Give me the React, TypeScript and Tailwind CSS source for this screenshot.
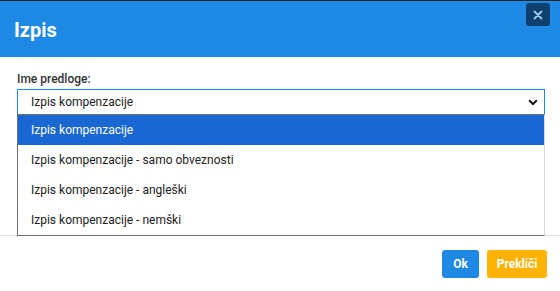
import React from "react";

export default function App() {
  const items = [
    "Izpis kompenzacije",
    "Izpis kompenzacije - samo obveznosti",
    "Izpis kompenzacije - angleški",
    "Izpis kompenzacije - nemški",
  ];
  return (
    <div
      className="w-[560px] h-[291px] bg-white flex flex-col overflow-hidden relative"
      style={{ fontFamily: "Roboto, 'Liberation Sans', sans-serif" }}
    >
      <div className="h-[1px] bg-[#23272b]" />
      <div className="h-[56px] bg-[#1e88e5] flex items-start justify-between pl-[14px] pr-[10px]">
        <div className="text-white text-[20px] font-bold mt-[17px] leading-[24px]">Izpis</div>
        <button className="mt-[2px] w-[24px] h-[23px] rounded-[3px] bg-[#0e3f6e] flex items-center justify-center">
          <svg width="10" height="10" viewBox="0 0 10 10">
            <path d="M1.5 1.5L8.5 8.5M8.5 1.5L1.5 8.5" stroke="#9ec9f0" strokeWidth="1.8" strokeLinecap="round" />
          </svg>
        </button>
      </div>
      <div className="h-[179px] border-b border-[#e3e3e3] px-[17px] pt-[15px] relative">
        <div className="text-[12px] font-medium text-[#333] leading-[14px]">Ime predloge:</div>
        <div className="mt-[3px] h-[26px] w-[528px] border border-[#1e88e5] flex items-center justify-between pl-[13px] pr-[6px]">
          <span className="text-[12px] text-[#222]">Izpis kompenzacije</span>
          <svg width="10" height="7" viewBox="0 0 10 7">
            <path d="M1.2 1.3L5 5L8.8 1.3" stroke="#111" strokeWidth="2" fill="none" />
          </svg>
        </div>
        <div className="absolute left-[17px] top-[57px] w-[528px] bg-white border border-[#6f6f6f] border-r-[#dcdcdc] z-10">
          {items.map((it, i) => (
            <div
              key={it}
              className={
                "h-[30px] flex items-center pl-[13px] text-[12px] " +
                (i === 0 ? "bg-[#1967d2] text-white" : "text-[#222]")
              }
            >
              {it}
            </div>
          ))}
        </div>
      </div>
      <div className="flex-1 flex justify-end items-start pt-[14px] pr-[13px] gap-[8px]">
        <button className="w-[37px] h-[28px] rounded-[3px] bg-[#1e88e5] text-white text-[12px] font-bold">Ok</button>
        <button className="w-[60px] h-[28px] rounded-[3px] bg-[#ffb300] text-white text-[12px] font-bold">Prekliči</button>
      </div>
    </div>
  );
}
